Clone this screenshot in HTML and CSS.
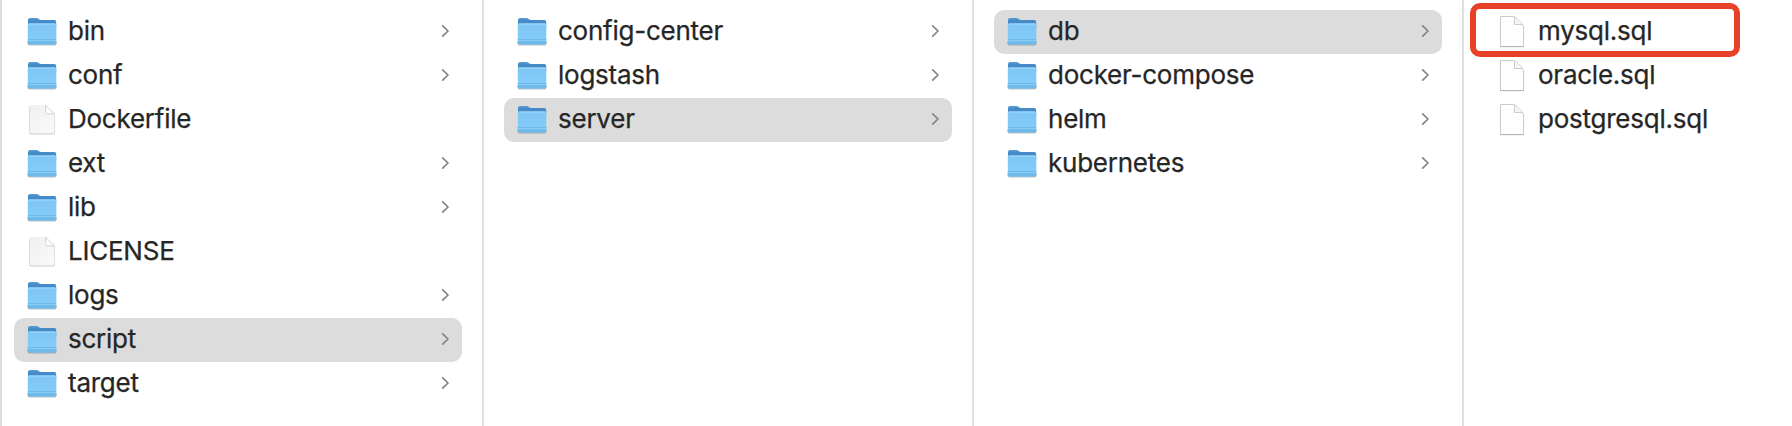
FILE: index.html
```
<!DOCTYPE html>
<html lang="en">
<head>
<meta charset="utf-8">
<title>Files</title>
<link rel="stylesheet" href="styles.css">
</head>
<body>
<svg class="symbols" aria-hidden="true">
  <defs>
    <linearGradient id="back" x1="0" y1="0" x2="0" y2="1"><stop offset="0" stop-color="#5a9dd4"/><stop offset=".3" stop-color="#4489c6"/><stop offset="1" stop-color="#4a93cf"/></linearGradient>
    <linearGradient id="front" x1="0" y1="0" x2="0" y2="1"><stop offset="0" stop-color="#8fcff8"/><stop offset=".12" stop-color="#7ec6f5"/><stop offset="1" stop-color="#86cdf9"/></linearGradient>
    <linearGradient id="paper" x1="0" y1="0" x2="1" y2="1"><stop offset="0" stop-color="#f0f0f0"/><stop offset="1" stop-color="#fafafa"/></linearGradient>
    <symbol id="folder" viewBox="0 0 32 32">
      <path d="M1.400 27q0 2.600 2 2.600h25.200q2 0 2-2.600v-2H1.400z" fill="#000" opacity=".25"/>
      <path d="M2 4q0-2 2-2h6.500q1.200 0 2 .8l.6.5q.7.600 1.900.600H28.300q1.900 0 1.900 1.900V12H2z" fill="url(#back)"/>
      <path d="M1.800 9.100q0-1.600 1.600-1.600H28.700q1.600 0 1.600 1.600V26.800q0 1.600-1.600 1.600H3.400q-1.600 0-1.600-1.600z" fill="url(#front)"/>
      <path d="M2.600 7.900H29.500" stroke="#a4dafb" stroke-width=".8"/>
      <path d="M1.800 23.500H30.300" stroke="#6cb4e6" stroke-width=".9"/>
      <path d="M1.800 25.300H30.300V26.800q0 1.600-1.600 1.600H3.400q-1.600 0-1.600-1.600z" fill="#6fb8e8"/>
    </symbol>
    <symbol id="doc" viewBox="0 0 32 32">
      <path d="M3.200 3.500q0-2 2-2H19.700L28.900 10.500V28.400q0 2-2 2H5.200q-2 0-2-2z" fill="#000" opacity=".2"/>
      <path d="M3.700 3.100q0-2 2-2H19.700L28.400 9.900V27.400q0 2-2 2H5.700q-2 0-2-2z" fill="url(#paper)"/>
      <path d="M19.700 1.300V8.100q0 1.900 1.900 1.900H28.400z" fill="#fff"/>
      <path d="M19.700 1.300V8.100q0 1.800 1.800 1.800H28.400z" fill="none" stroke="#c6c6c6" stroke-width=".8"/>
    </symbol>
    <symbol id="sheet" viewBox="0 0 32 34">
      <path d="M4.500 2.500H17.500Q20 3 22 5.500L25 8.500Q27.500 11 27.500 13V32.500H4.500z" fill="#fefefe" stroke="#c4c4c4" stroke-width=".9" stroke-linejoin="round"/>
      <path d="M4.500 32.600H27.500" stroke="#b6b6b6" stroke-width="1.100"/>
      <path d="M18.500 3.400V10.500H26" fill="#f6f6f6" stroke="#c4c4c4" stroke-width=".9"/>
    </symbol>
    <symbol id="chevron" viewBox="0 0 10 16"><path d="M2.700 2.800 8 8 2.700 13.200" fill="none" stroke="#858585" stroke-width="1.700" stroke-linecap="round" stroke-linejoin="round"/></symbol>
  </defs>
</svg>
<main class="browser">
  <ul class="column column-first">
    <li class="row"><svg class="icon"><use href="#folder"/></svg><span class="name">bin</span><svg class="chevron"><use href="#chevron"/></svg></li>
    <li class="row"><svg class="icon"><use href="#folder"/></svg><span class="name">conf</span><svg class="chevron"><use href="#chevron"/></svg></li>
    <li class="row"><svg class="icon"><use href="#doc"/></svg><span class="name">Dockerfile</span></li>
    <li class="row"><svg class="icon"><use href="#folder"/></svg><span class="name">ext</span><svg class="chevron"><use href="#chevron"/></svg></li>
    <li class="row"><svg class="icon"><use href="#folder"/></svg><span class="name">lib</span><svg class="chevron"><use href="#chevron"/></svg></li>
    <li class="row"><svg class="icon"><use href="#doc"/></svg><span class="name">LICENSE</span></li>
    <li class="row"><svg class="icon"><use href="#folder"/></svg><span class="name">logs</span><svg class="chevron"><use href="#chevron"/></svg></li>
    <li class="row selected"><svg class="icon"><use href="#folder"/></svg><span class="name">script</span><svg class="chevron"><use href="#chevron"/></svg></li>
    <li class="row"><svg class="icon"><use href="#folder"/></svg><span class="name">target</span><svg class="chevron"><use href="#chevron"/></svg></li>
  </ul>
  <ul class="column">
    <li class="row"><svg class="icon"><use href="#folder"/></svg><span class="name">config-center</span><svg class="chevron"><use href="#chevron"/></svg></li>
    <li class="row"><svg class="icon"><use href="#folder"/></svg><span class="name">logstash</span><svg class="chevron"><use href="#chevron"/></svg></li>
    <li class="row selected"><svg class="icon"><use href="#folder"/></svg><span class="name">server</span><svg class="chevron"><use href="#chevron"/></svg></li>
  </ul>
  <ul class="column">
    <li class="row selected"><svg class="icon"><use href="#folder"/></svg><span class="name">db</span><svg class="chevron"><use href="#chevron"/></svg></li>
    <li class="row"><svg class="icon"><use href="#folder"/></svg><span class="name">docker-compose</span><svg class="chevron"><use href="#chevron"/></svg></li>
    <li class="row"><svg class="icon"><use href="#folder"/></svg><span class="name">helm</span><svg class="chevron"><use href="#chevron"/></svg></li>
    <li class="row"><svg class="icon"><use href="#folder"/></svg><span class="name">kubernetes</span><svg class="chevron"><use href="#chevron"/></svg></li>
  </ul>
  <ul class="column column-last">
    <li class="row marked"><svg class="icon sheet"><use href="#sheet"/></svg><span class="name">mysql.sql</span></li>
    <li class="row"><svg class="icon sheet"><use href="#sheet"/></svg><span class="name">oracle.sql</span></li>
    <li class="row"><svg class="icon sheet"><use href="#sheet"/></svg><span class="name">postgresql.sql</span></li>
  </ul>
</main>
</body>
</html>
```
FILE: styles.css
```
*, *::after { box-sizing: border-box; }
body {
  margin: 0;
  background: #fff;
  color: #262626;
  font: 26px/42px Inter, "Liberation Sans", sans-serif;
  letter-spacing: -0.24px;
  -webkit-text-stroke: 0.25px #262626;
  overflow: hidden;
}
.symbols { position: absolute; width: 0; height: 0; }
.browser {
  display: grid;
  grid-template-columns: 484px 490px 490px 1fr;
  height: 426px;
}
.column {
  margin: 0;
  padding: 10px 20px;
  list-style: none;
  border-right: 2px solid #e0e0e0;
}
.column-first { padding-left: 12px; border-left: 2px solid #dcdcdc; }
.column-last { border-right: 0; }
.row {
  position: relative;
  display: flex;
  align-items: center;
  height: 44px;
  padding: 0 12px;
  border-radius: 10px;
}
.selected { background: #dcdcdc; }
.icon { flex: none; width: 32px; height: 32px; margin-bottom: 1px; }
.sheet { height: 34px; margin-bottom: 2px; }
.name { flex: 1; height: 44px; margin-left: 10px; white-space: nowrap; }
.chevron { flex: none; width: 10px; height: 16px; margin-bottom: 2px; }
.marked::after {
  content: "";
  position: absolute;
  left: -14px;
  top: -7px;
  width: 270px;
  height: 54px;
  border: 6px solid #e8412a;
  border-radius: 10px;
}
```
